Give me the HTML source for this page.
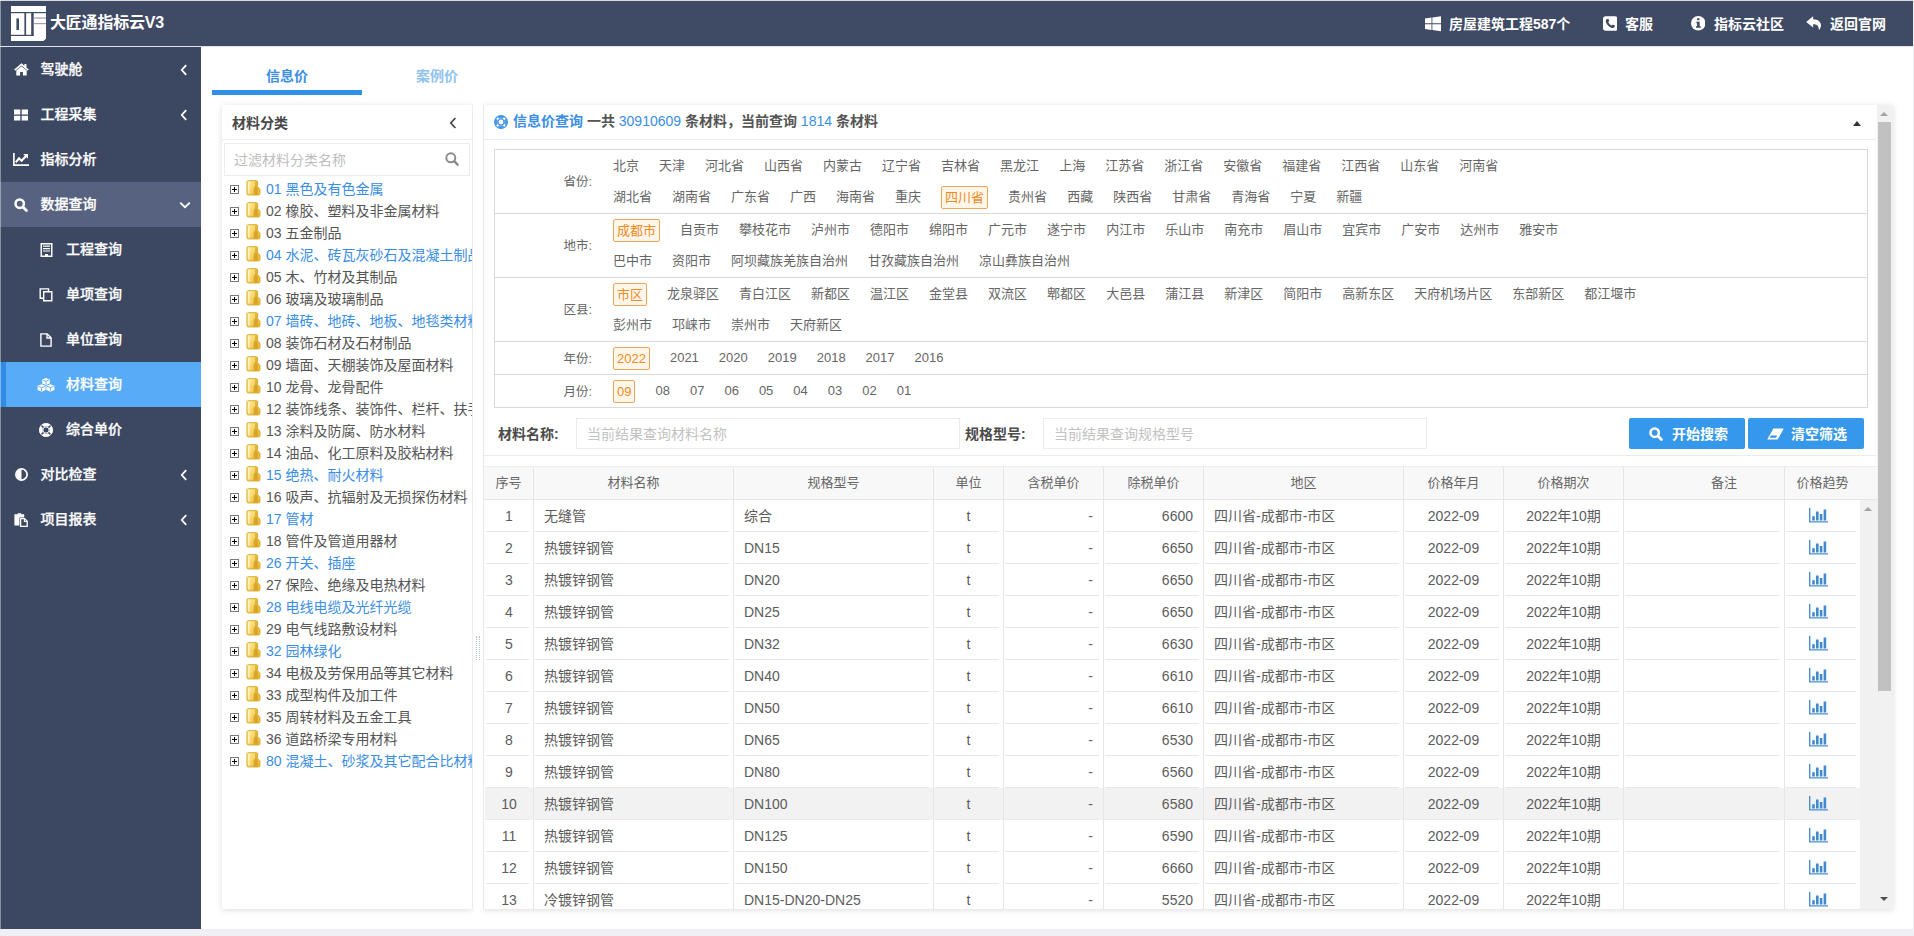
<!DOCTYPE html><html lang="zh-CN"><head><meta charset="utf-8"><title>大匠通指标云V3</title><style>
*{box-sizing:border-box;margin:0;padding:0}
html,body{width:1914px;height:936px;overflow:hidden;background:#f0f0f4}
body{position:relative;font-family:"Liberation Sans","Noto Sans CJK SC",sans-serif;font-size:14px;color:#555;-webkit-font-smoothing:antialiased}
.abs{position:absolute}
#hdr{left:0;top:0;width:1913px;height:47px;background:#3f4a64;border-bottom:1px solid #dfe2ea;color:#fff}
#hdr .t{position:absolute;top:2px;height:45px;line-height:45px;font-weight:700;white-space:nowrap}
#side{left:0;top:47px;width:201px;height:882px;background:#3c4862}
.mi{position:absolute;left:0;width:201px;height:45px;line-height:45px;color:#fff;font-weight:500;-webkit-text-stroke:0.25px #fff;font-size:14px;white-space:nowrap}
.mi .ic{position:absolute;top:0;height:45px;display:flex;align-items:center;justify-content:center}
.mi .tx{position:absolute;top:0}
#main{left:201px;top:47px;width:1712px;height:882px;background:#fff}
.tab{position:absolute;top:57px;height:38px;width:150px;text-align:center;line-height:38px;font-weight:700;font-size:14px}
.card{position:absolute;background:#fff;box-shadow:0 1px 6px rgba(0,0,0,.14)}
.tr{position:absolute;left:0;height:22px;line-height:22px;white-space:nowrap;font-size:14px;color:#555}
.tr.b{color:#3a8ee6}
.tr svg{position:absolute}
.fl{position:absolute;left:0;width:97px;text-align:right;font-size:12.5px;color:#666}
.frow{position:absolute;left:0;right:0;border-top:1px solid #d9d9d9}
.fi{position:absolute;left:118px;white-space:nowrap;font-size:13px;color:#666;height:31px;line-height:31px}
.fi span{display:inline-block;margin-right:20px;height:23px;line-height:21px;vertical-align:middle}
.fi span.s{padding:0 3px;line-height:21px;border:1px solid #f0a655;border-radius:2px;color:#f08a24;background:#fff6ea}
.inp{position:absolute;height:31px;border:1px solid #ececec;background:#fff;font-size:14px;color:#c2c2c2;line-height:31px;padding-left:10px;white-space:nowrap}
.lab{position:absolute;font-size:14px;font-weight:700;color:#4a4a4a;line-height:33px;white-space:nowrap}
.btn{position:absolute;height:31px;line-height:33px;background:#3598ea;color:#fff;font-weight:700;font-size:14px;border-radius:2px;white-space:nowrap}
.th{position:absolute;top:0;height:33px;line-height:31px;text-align:center;font-size:13px;color:#666;border-right:1px solid #e6e6e6;white-space:nowrap}
.row{position:absolute;left:0;width:1376px;height:32px}
.row.h{background:#f2f2f2}
.c{position:absolute;top:0;height:32px;background:linear-gradient(#e8e8e8,#e8e8e8) no-repeat 1px 31px / calc(100% - 5px) 1px;line-height:33px;font-size:14px;color:#5c5c5c;border-right:1px solid #e6e6e6;white-space:nowrap;overflow:hidden}
</style></head><body>
<div id="hdr" class="abs">
<svg width="35" height="35" viewBox="0 0 35 35" style="position:absolute;left:11px;top:6px"><path fill="#fff" d="M0 0H35V32.6L32.6 35H0z"/><g fill="#3f4a64"><rect x="0" y="6" width="35" height="1.2"/><rect x="13.4" y="6" width="1.7" height="23.6"/><rect x="20.2" y="6" width="2.5" height="23.6"/><rect x="5.4" y="12.4" width="2.6" height="11.6"/><rect x="0" y="28.8" width="22.7" height="1.2"/></g><g fill="#9aa0ad"><rect x="22.7" y="11.4" width="12.3" height="1.2"/><rect x="22.7" y="17" width="12.3" height="1.2"/></g></svg>
<div class="t" style="left:50px;top:0;font-size:16px;letter-spacing:-0.2px">大匠通指标云V3</div>
<div class="abs" style="left:1425px;top:16px;line-height:0"><svg width="16" height="15.5" viewBox="0 0 15 14" ><path fill="#fff" d="M0 2 L6.1 1.15 V6.6 H0z M6.9 1.05 L15 0 V6.6 H6.9z M0 7.4 H6.1 V12.85 L0 12z M6.9 7.4 H15 V14 L6.9 12.95z"/></svg></div>
<div class="t" style="left:1449px;font-size:14px">房屋建筑工程587个</div>
<div class="abs" style="left:1602.5px;top:16px;line-height:0"><svg width="14.5" height="15" viewBox="0 0 13 13" ><rect width="13" height="13" rx="2.4" fill="#fff"/><path fill="#3f4a64" d="M3.2 2.6 L4.8 2.3 L5.6 4.3 L4.7 5.1 C5.3 6.5 6.4 7.6 7.8 8.3 L8.7 7.3 L10.7 8.2 L10.3 9.9 C9.6 10.6 8.5 10.7 7.3 10.2 C5.1 9.3 3.5 7.6 2.7 5.4 C2.3 4.2 2.5 3.2 3.2 2.6z"/></svg></div>
<div class="t" style="left:1625px;font-size:14px">客服</div>
<div class="abs" style="left:1690.5px;top:16px;line-height:0"><svg width="14.5" height="14.5" viewBox="0 0 14 14" ><circle cx="7" cy="7" r="7" fill="#fff"/><path fill="#3f4a64" d="M5.9 2.2h2.3v2H5.9zM5.2 5.6h3.2v4.3h1v1.5H4.9V9.9h1V7.1h-0.7z"/></svg></div>
<div class="t" style="left:1714px;font-size:14px">指标云社区</div>
<div class="abs" style="left:1806px;top:15.5px;line-height:0"><svg width="16.5" height="14.5" viewBox="0 0 16 14" ><path fill="#fff" d="M6.9 0.2 L0.2 5.7 L6.9 11.2 V8 C10.2 8 12.3 9 12.6 13.8 C16.6 9 14.2 3.2 6.9 3.1 Z"/></svg></div>
<div class="t" style="left:1830px;font-size:14px">返回官网</div>
</div>
<div id="side" class="abs">
<div class="mi" style="top:0px;"><span class="ic" style="left:12px;width:18px"><svg width="15" height="13" viewBox="0 0 15 13" ><path fill="#fff" d="M7.5 0.3 L0.2 6.5 L1.2 7.7 L7.5 2.4 L13.8 7.7 L14.8 6.5 L12.4 4.4 V1 H10.4 V2.7 Z"/><path fill="#fff" d="M7.5 3.2 L2.3 7.5 V12.6 H6.1 V9 H8.9 V12.6 H12.7 V7.5 Z"/></svg></span><span class="tx" style="left:40.5px">驾驶舱</span>
<span class="ic" style="left:179px;width:10px"><svg width="8" height="12" viewBox="0 0 8 12" ><path fill="none" stroke="#fff" stroke-width="1.8" d="M6.2 1.2 L1.8 6 L6.2 10.8"/></svg></span>
</div>
<div class="mi" style="top:45px;"><span class="ic" style="left:12px;width:18px"><svg width="14" height="12" viewBox="0 0 14 12" ><path fill="#fff" d="M0 0.6h6.3v4.8H0zM7.7 0.6H14v4.8H7.7zM0 6.8h6.3v4.8H0zM7.7 6.8H14v4.8H7.7z"/></svg></span><span class="tx" style="left:40.5px">工程采集</span>
<span class="ic" style="left:179px;width:10px"><svg width="8" height="12" viewBox="0 0 8 12" ><path fill="none" stroke="#fff" stroke-width="1.8" d="M6.2 1.2 L1.8 6 L6.2 10.8"/></svg></span>
</div>
<div class="mi" style="top:90px;"><span class="ic" style="left:12px;width:18px"><svg width="16" height="13" viewBox="0 0 16 13" ><path fill="#fff" d="M0 0h1.7v11.3H16V13H0z"/><path fill="none" stroke="#fff" stroke-width="2.1" stroke-linejoin="miter" d="M2.8 9.4 L6 5.4 L8.6 7.8 L13 3"/><path fill="#fff" d="M10.2 1h4.8v4.8z"/></svg></span><span class="tx" style="left:40.5px">指标分析</span>
</div>
<div class="mi" style="top:135px;background:#56627f;"><span class="ic" style="left:12px;width:18px"><svg width="14" height="14" viewBox="0 0 14 14" ><circle cx="5.7" cy="5.7" r="4.2" fill="none" stroke="#fff" stroke-width="2.5"/><path stroke="#fff" stroke-width="2.8" stroke-linecap="round" d="M9.4 9.4 L12.4 12.4"/></svg></span><span class="tx" style="left:40.5px">数据查询</span>
<span class="ic" style="left:179px;width:12px"><svg width="12" height="8" viewBox="0 0 12 8" ><path fill="none" stroke="#fff" stroke-width="1.8" d="M1.2 1.6 L6 6.2 L10.8 1.6"/></svg></span>
</div>
<div class="mi" style="top:180px;"><span class="ic" style="left:37px;width:18px"><svg width="13" height="14" viewBox="0 0 13 14" ><path fill="#fff" fill-rule="evenodd" d="M0.5 0h12v14h-12zM2 1.5v11h3v-1.6h3v1.6h3v-11z"/><path fill="#fff" d="M3 2.6h7v1.2H3zM3 5h7v1.2H3zM3 7.4h7v1.2H3z"/></svg></span><span class="tx" style="left:66px">工程查询</span>
</div>
<div class="mi" style="top:225px;"><span class="ic" style="left:37px;width:18px"><svg width="14" height="14" viewBox="0 0 14 14" ><path fill="none" stroke="#fff" stroke-width="1.4" d="M4.7 3.7h8.1v9.1H4.7z"/><path fill="none" stroke="#fff" stroke-width="1.4" d="M9.5 3.4V0.9H1.2v9.4h3.2"/></svg></span><span class="tx" style="left:66px">单项查询</span>
</div>
<div class="mi" style="top:270px;"><span class="ic" style="left:37px;width:18px"><svg width="12" height="14" viewBox="0 0 12 14" ><path fill="none" stroke="#fff" stroke-width="1.4" d="M0.9 0.9h6.3l3.9 3.9v8.3H0.9z"/><path fill="none" stroke="#fff" stroke-width="1.3" d="M7 1v4h4"/></svg></span><span class="tx" style="left:66px">单位查询</span>
</div>
<div class="mi" style="top:315px;background:#58abf7;box-shadow:inset 6px 0 0 #2f8be3;"><span class="ic" style="left:37px;width:18px"><svg width="18" height="14" viewBox="0 0 18 14" ><g fill="#fff"><path d="M9 0 L12.8 1.5 V5.4 L9 7 L5.2 5.4 V1.5z"/><path d="M4.6 6.2 L8.6 7.8 V12 L4.6 13.8 L0.6 12 V7.8z"/><path d="M13.4 6.2 L17.4 7.8 V12 L13.4 13.8 L9.4 12 V7.8z"/></g><g fill="none" stroke="#58abf7" stroke-width="0.9"><path d="M5.9 2 L9 3.3 L12.1 2 M9 3.3 V6.4"/><path d="M1.3 8.3 L4.6 9.7 L7.9 8.3 M4.6 9.7 V13.2"/><path d="M10.1 8.3 L13.4 9.7 L16.7 8.3 M13.4 9.7 V13.2"/></g></svg></span><span class="tx" style="left:66px">材料查询</span>
</div>
<div class="mi" style="top:360px;"><span class="ic" style="left:37px;width:18px"><svg width="14" height="14" viewBox="0 0 14 14" ><circle cx="7" cy="7" r="5.1" fill="none" stroke="#fff" stroke-width="3.4"/><g stroke="#3c4862" stroke-width="1.5"><path d="M2.2 2.2 L4.6 4.6 M11.8 2.2 L9.4 4.6 M2.2 11.8 L4.6 9.4 M11.8 11.8 L9.4 9.4"/></g><circle cx="7" cy="7" r="6.6" fill="none" stroke="#fff" stroke-width="0.8"/><circle cx="7" cy="7" r="3" fill="none" stroke="#fff" stroke-width="0.8"/></svg></span><span class="tx" style="left:66px">综合单价</span>
</div>
<div class="mi" style="top:405px;"><span class="ic" style="left:12px;width:18px"><svg width="13" height="13" viewBox="0 0 13 13" ><circle cx="6.5" cy="6.5" r="5.6" fill="none" stroke="#fff" stroke-width="1.7"/><path fill="#fff" d="M6.5 1.6 A4.9 4.9 0 0 0 6.5 11.4z"/></svg></span><span class="tx" style="left:40.5px">对比检查</span>
<span class="ic" style="left:179px;width:10px"><svg width="8" height="12" viewBox="0 0 8 12" ><path fill="none" stroke="#fff" stroke-width="1.8" d="M6.2 1.2 L1.8 6 L6.2 10.8"/></svg></span>
</div>
<div class="mi" style="top:450px;"><span class="ic" style="left:12px;width:18px"><svg width="14" height="14" viewBox="0 0 14 14" ><path fill="#fff" d="M0.4 1.2h3.2V0.2h3.6v1h3v3.2H5.4v8H0.4z"/><path fill="none" stroke="#fff" stroke-width="1.3" d="M6.6 5.6h4l2.6 2.6v5.1H6.6z"/><path fill="none" stroke="#fff" stroke-width="1.1" d="M10.4 5.8v2.7h2.7"/></svg></span><span class="tx" style="left:40.5px">项目报表</span>
<span class="ic" style="left:179px;width:10px"><svg width="8" height="12" viewBox="0 0 8 12" ><path fill="none" stroke="#fff" stroke-width="1.8" d="M6.2 1.2 L1.8 6 L6.2 10.8"/></svg></span>
</div>
</div>
<div id="main" class="abs"></div>
<div class="tab" style="left:212px;color:#3a8ee6">信息价</div>
<div class="abs" style="left:212px;top:90px;width:150px;height:5px;background:#2f8fe9"></div>
<div class="tab" style="left:362px;color:#8fc3f0">案例价</div>
<div class="card" style="left:222px;top:105px;width:250px;height:804px;overflow:hidden">
<div class="abs" style="left:0;top:0;width:250px;height:35px;border-bottom:1px solid #eee"></div>
<div class="abs" style="left:10px;top:1px;line-height:35px;font-weight:700;color:#484848;font-size:14px">材料分类</div>
<div class="abs" style="left:227px;top:11px"><svg width="8" height="12" viewBox="0 0 8 12" ><path fill="none" stroke="#444" stroke-width="1.7" d="M6.4 1 L1.8 6 L6.4 11"/></svg></div>
<div class="abs" style="left:2px;top:38px;width:246px;height:33px;border:1px solid #ececec"></div>
<div class="abs" style="left:12px;top:39px;line-height:33px;color:#bdbdbd;font-size:14px">过滤材料分类名称</div>
<div class="abs" style="left:223px;top:47px"><svg width="14" height="14" viewBox="0 0 14 14" ><circle cx="5.8" cy="5.8" r="4.5" fill="none" stroke="#8a8a8a" stroke-width="1.9"/><path stroke="#8a8a8a" stroke-width="2.4" stroke-linecap="round" d="M9.4 9.4 L12.6 12.6"/></svg></div>
<div class="abs" style="left:0;top:73px;width:250px;height:700px;overflow:hidden">
<div class="tr b" style="top:0px"><svg style="left:8px;top:7px" width="9" height="9" viewBox="0 0 9 9" ><rect x="0.5" y="0.5" width="8" height="8" fill="#fff" stroke="#7a7a7a"/><path stroke="#000" stroke-width="1" d="M2 4.5h5M4.5 2v5"/></svg><svg style="left:24px;top:2px" width="15" height="16" viewBox="0 0 16 17" ><defs><linearGradient id="fg0" x1="0" y1="0" x2="1" y2="0.7"><stop offset="0" stop-color="#fff3ae"/><stop offset="0.5" stop-color="#f7d568"/><stop offset="1" stop-color="#ecba3a"/></linearGradient></defs><path d="M1 2.2 Q1 0.7 2.5 0.7 H11 Q12.4 0.7 12.4 2.2 V7.2 L14.9 9.8 V14.4 Q14.9 15.9 13.4 15.9 H2.5 Q1 15.9 1 14.4 Z" fill="url(#fg0)" stroke="#d6a722" stroke-width="1"/><path d="M9.9 1.4 h1.5 v5.4 l1.1 1.8 v6.8 h-4.3 v-6.8 l1.7 -1.9z" fill="#cf961a" opacity=".7"/><path d="M3.1 2.4 V14.4" stroke="#fffbe0" stroke-width="1.6" opacity=".75"/></svg><span style="position:absolute;left:44px">01 黑色及有色金属</span></div>
<div class="tr" style="top:22px"><svg style="left:8px;top:7px" width="9" height="9" viewBox="0 0 9 9" ><rect x="0.5" y="0.5" width="8" height="8" fill="#fff" stroke="#7a7a7a"/><path stroke="#000" stroke-width="1" d="M2 4.5h5M4.5 2v5"/></svg><svg style="left:24px;top:2px" width="15" height="16" viewBox="0 0 16 17" ><defs><linearGradient id="fg1" x1="0" y1="0" x2="1" y2="0.7"><stop offset="0" stop-color="#fff3ae"/><stop offset="0.5" stop-color="#f7d568"/><stop offset="1" stop-color="#ecba3a"/></linearGradient></defs><path d="M1 2.2 Q1 0.7 2.5 0.7 H11 Q12.4 0.7 12.4 2.2 V7.2 L14.9 9.8 V14.4 Q14.9 15.9 13.4 15.9 H2.5 Q1 15.9 1 14.4 Z" fill="url(#fg1)" stroke="#d6a722" stroke-width="1"/><path d="M9.9 1.4 h1.5 v5.4 l1.1 1.8 v6.8 h-4.3 v-6.8 l1.7 -1.9z" fill="#cf961a" opacity=".7"/><path d="M3.1 2.4 V14.4" stroke="#fffbe0" stroke-width="1.6" opacity=".75"/></svg><span style="position:absolute;left:44px">02 橡胶、塑料及非金属材料</span></div>
<div class="tr" style="top:44px"><svg style="left:8px;top:7px" width="9" height="9" viewBox="0 0 9 9" ><rect x="0.5" y="0.5" width="8" height="8" fill="#fff" stroke="#7a7a7a"/><path stroke="#000" stroke-width="1" d="M2 4.5h5M4.5 2v5"/></svg><svg style="left:24px;top:2px" width="15" height="16" viewBox="0 0 16 17" ><defs><linearGradient id="fg2" x1="0" y1="0" x2="1" y2="0.7"><stop offset="0" stop-color="#fff3ae"/><stop offset="0.5" stop-color="#f7d568"/><stop offset="1" stop-color="#ecba3a"/></linearGradient></defs><path d="M1 2.2 Q1 0.7 2.5 0.7 H11 Q12.4 0.7 12.4 2.2 V7.2 L14.9 9.8 V14.4 Q14.9 15.9 13.4 15.9 H2.5 Q1 15.9 1 14.4 Z" fill="url(#fg2)" stroke="#d6a722" stroke-width="1"/><path d="M9.9 1.4 h1.5 v5.4 l1.1 1.8 v6.8 h-4.3 v-6.8 l1.7 -1.9z" fill="#cf961a" opacity=".7"/><path d="M3.1 2.4 V14.4" stroke="#fffbe0" stroke-width="1.6" opacity=".75"/></svg><span style="position:absolute;left:44px">03 五金制品</span></div>
<div class="tr b" style="top:66px"><svg style="left:8px;top:7px" width="9" height="9" viewBox="0 0 9 9" ><rect x="0.5" y="0.5" width="8" height="8" fill="#fff" stroke="#7a7a7a"/><path stroke="#000" stroke-width="1" d="M2 4.5h5M4.5 2v5"/></svg><svg style="left:24px;top:2px" width="15" height="16" viewBox="0 0 16 17" ><defs><linearGradient id="fg3" x1="0" y1="0" x2="1" y2="0.7"><stop offset="0" stop-color="#fff3ae"/><stop offset="0.5" stop-color="#f7d568"/><stop offset="1" stop-color="#ecba3a"/></linearGradient></defs><path d="M1 2.2 Q1 0.7 2.5 0.7 H11 Q12.4 0.7 12.4 2.2 V7.2 L14.9 9.8 V14.4 Q14.9 15.9 13.4 15.9 H2.5 Q1 15.9 1 14.4 Z" fill="url(#fg3)" stroke="#d6a722" stroke-width="1"/><path d="M9.9 1.4 h1.5 v5.4 l1.1 1.8 v6.8 h-4.3 v-6.8 l1.7 -1.9z" fill="#cf961a" opacity=".7"/><path d="M3.1 2.4 V14.4" stroke="#fffbe0" stroke-width="1.6" opacity=".75"/></svg><span style="position:absolute;left:44px">04 水泥、砖瓦灰砂石及混凝土制品</span></div>
<div class="tr" style="top:88px"><svg style="left:8px;top:7px" width="9" height="9" viewBox="0 0 9 9" ><rect x="0.5" y="0.5" width="8" height="8" fill="#fff" stroke="#7a7a7a"/><path stroke="#000" stroke-width="1" d="M2 4.5h5M4.5 2v5"/></svg><svg style="left:24px;top:2px" width="15" height="16" viewBox="0 0 16 17" ><defs><linearGradient id="fg4" x1="0" y1="0" x2="1" y2="0.7"><stop offset="0" stop-color="#fff3ae"/><stop offset="0.5" stop-color="#f7d568"/><stop offset="1" stop-color="#ecba3a"/></linearGradient></defs><path d="M1 2.2 Q1 0.7 2.5 0.7 H11 Q12.4 0.7 12.4 2.2 V7.2 L14.9 9.8 V14.4 Q14.9 15.9 13.4 15.9 H2.5 Q1 15.9 1 14.4 Z" fill="url(#fg4)" stroke="#d6a722" stroke-width="1"/><path d="M9.9 1.4 h1.5 v5.4 l1.1 1.8 v6.8 h-4.3 v-6.8 l1.7 -1.9z" fill="#cf961a" opacity=".7"/><path d="M3.1 2.4 V14.4" stroke="#fffbe0" stroke-width="1.6" opacity=".75"/></svg><span style="position:absolute;left:44px">05 木、竹材及其制品</span></div>
<div class="tr" style="top:110px"><svg style="left:8px;top:7px" width="9" height="9" viewBox="0 0 9 9" ><rect x="0.5" y="0.5" width="8" height="8" fill="#fff" stroke="#7a7a7a"/><path stroke="#000" stroke-width="1" d="M2 4.5h5M4.5 2v5"/></svg><svg style="left:24px;top:2px" width="15" height="16" viewBox="0 0 16 17" ><defs><linearGradient id="fg5" x1="0" y1="0" x2="1" y2="0.7"><stop offset="0" stop-color="#fff3ae"/><stop offset="0.5" stop-color="#f7d568"/><stop offset="1" stop-color="#ecba3a"/></linearGradient></defs><path d="M1 2.2 Q1 0.7 2.5 0.7 H11 Q12.4 0.7 12.4 2.2 V7.2 L14.9 9.8 V14.4 Q14.9 15.9 13.4 15.9 H2.5 Q1 15.9 1 14.4 Z" fill="url(#fg5)" stroke="#d6a722" stroke-width="1"/><path d="M9.9 1.4 h1.5 v5.4 l1.1 1.8 v6.8 h-4.3 v-6.8 l1.7 -1.9z" fill="#cf961a" opacity=".7"/><path d="M3.1 2.4 V14.4" stroke="#fffbe0" stroke-width="1.6" opacity=".75"/></svg><span style="position:absolute;left:44px">06 玻璃及玻璃制品</span></div>
<div class="tr b" style="top:132px"><svg style="left:8px;top:7px" width="9" height="9" viewBox="0 0 9 9" ><rect x="0.5" y="0.5" width="8" height="8" fill="#fff" stroke="#7a7a7a"/><path stroke="#000" stroke-width="1" d="M2 4.5h5M4.5 2v5"/></svg><svg style="left:24px;top:2px" width="15" height="16" viewBox="0 0 16 17" ><defs><linearGradient id="fg6" x1="0" y1="0" x2="1" y2="0.7"><stop offset="0" stop-color="#fff3ae"/><stop offset="0.5" stop-color="#f7d568"/><stop offset="1" stop-color="#ecba3a"/></linearGradient></defs><path d="M1 2.2 Q1 0.7 2.5 0.7 H11 Q12.4 0.7 12.4 2.2 V7.2 L14.9 9.8 V14.4 Q14.9 15.9 13.4 15.9 H2.5 Q1 15.9 1 14.4 Z" fill="url(#fg6)" stroke="#d6a722" stroke-width="1"/><path d="M9.9 1.4 h1.5 v5.4 l1.1 1.8 v6.8 h-4.3 v-6.8 l1.7 -1.9z" fill="#cf961a" opacity=".7"/><path d="M3.1 2.4 V14.4" stroke="#fffbe0" stroke-width="1.6" opacity=".75"/></svg><span style="position:absolute;left:44px">07 墙砖、地砖、地板、地毯类材料</span></div>
<div class="tr" style="top:154px"><svg style="left:8px;top:7px" width="9" height="9" viewBox="0 0 9 9" ><rect x="0.5" y="0.5" width="8" height="8" fill="#fff" stroke="#7a7a7a"/><path stroke="#000" stroke-width="1" d="M2 4.5h5M4.5 2v5"/></svg><svg style="left:24px;top:2px" width="15" height="16" viewBox="0 0 16 17" ><defs><linearGradient id="fg7" x1="0" y1="0" x2="1" y2="0.7"><stop offset="0" stop-color="#fff3ae"/><stop offset="0.5" stop-color="#f7d568"/><stop offset="1" stop-color="#ecba3a"/></linearGradient></defs><path d="M1 2.2 Q1 0.7 2.5 0.7 H11 Q12.4 0.7 12.4 2.2 V7.2 L14.9 9.8 V14.4 Q14.9 15.9 13.4 15.9 H2.5 Q1 15.9 1 14.4 Z" fill="url(#fg7)" stroke="#d6a722" stroke-width="1"/><path d="M9.9 1.4 h1.5 v5.4 l1.1 1.8 v6.8 h-4.3 v-6.8 l1.7 -1.9z" fill="#cf961a" opacity=".7"/><path d="M3.1 2.4 V14.4" stroke="#fffbe0" stroke-width="1.6" opacity=".75"/></svg><span style="position:absolute;left:44px">08 装饰石材及石材制品</span></div>
<div class="tr" style="top:176px"><svg style="left:8px;top:7px" width="9" height="9" viewBox="0 0 9 9" ><rect x="0.5" y="0.5" width="8" height="8" fill="#fff" stroke="#7a7a7a"/><path stroke="#000" stroke-width="1" d="M2 4.5h5M4.5 2v5"/></svg><svg style="left:24px;top:2px" width="15" height="16" viewBox="0 0 16 17" ><defs><linearGradient id="fg8" x1="0" y1="0" x2="1" y2="0.7"><stop offset="0" stop-color="#fff3ae"/><stop offset="0.5" stop-color="#f7d568"/><stop offset="1" stop-color="#ecba3a"/></linearGradient></defs><path d="M1 2.2 Q1 0.7 2.5 0.7 H11 Q12.4 0.7 12.4 2.2 V7.2 L14.9 9.8 V14.4 Q14.9 15.9 13.4 15.9 H2.5 Q1 15.9 1 14.4 Z" fill="url(#fg8)" stroke="#d6a722" stroke-width="1"/><path d="M9.9 1.4 h1.5 v5.4 l1.1 1.8 v6.8 h-4.3 v-6.8 l1.7 -1.9z" fill="#cf961a" opacity=".7"/><path d="M3.1 2.4 V14.4" stroke="#fffbe0" stroke-width="1.6" opacity=".75"/></svg><span style="position:absolute;left:44px">09 墙面、天棚装饰及屋面材料</span></div>
<div class="tr" style="top:198px"><svg style="left:8px;top:7px" width="9" height="9" viewBox="0 0 9 9" ><rect x="0.5" y="0.5" width="8" height="8" fill="#fff" stroke="#7a7a7a"/><path stroke="#000" stroke-width="1" d="M2 4.5h5M4.5 2v5"/></svg><svg style="left:24px;top:2px" width="15" height="16" viewBox="0 0 16 17" ><defs><linearGradient id="fg9" x1="0" y1="0" x2="1" y2="0.7"><stop offset="0" stop-color="#fff3ae"/><stop offset="0.5" stop-color="#f7d568"/><stop offset="1" stop-color="#ecba3a"/></linearGradient></defs><path d="M1 2.2 Q1 0.7 2.5 0.7 H11 Q12.4 0.7 12.4 2.2 V7.2 L14.9 9.8 V14.4 Q14.9 15.9 13.4 15.9 H2.5 Q1 15.9 1 14.4 Z" fill="url(#fg9)" stroke="#d6a722" stroke-width="1"/><path d="M9.9 1.4 h1.5 v5.4 l1.1 1.8 v6.8 h-4.3 v-6.8 l1.7 -1.9z" fill="#cf961a" opacity=".7"/><path d="M3.1 2.4 V14.4" stroke="#fffbe0" stroke-width="1.6" opacity=".75"/></svg><span style="position:absolute;left:44px">10 龙骨、龙骨配件</span></div>
<div class="tr" style="top:220px"><svg style="left:8px;top:7px" width="9" height="9" viewBox="0 0 9 9" ><rect x="0.5" y="0.5" width="8" height="8" fill="#fff" stroke="#7a7a7a"/><path stroke="#000" stroke-width="1" d="M2 4.5h5M4.5 2v5"/></svg><svg style="left:24px;top:2px" width="15" height="16" viewBox="0 0 16 17" ><defs><linearGradient id="fg10" x1="0" y1="0" x2="1" y2="0.7"><stop offset="0" stop-color="#fff3ae"/><stop offset="0.5" stop-color="#f7d568"/><stop offset="1" stop-color="#ecba3a"/></linearGradient></defs><path d="M1 2.2 Q1 0.7 2.5 0.7 H11 Q12.4 0.7 12.4 2.2 V7.2 L14.9 9.8 V14.4 Q14.9 15.9 13.4 15.9 H2.5 Q1 15.9 1 14.4 Z" fill="url(#fg10)" stroke="#d6a722" stroke-width="1"/><path d="M9.9 1.4 h1.5 v5.4 l1.1 1.8 v6.8 h-4.3 v-6.8 l1.7 -1.9z" fill="#cf961a" opacity=".7"/><path d="M3.1 2.4 V14.4" stroke="#fffbe0" stroke-width="1.6" opacity=".75"/></svg><span style="position:absolute;left:44px">12 装饰线条、装饰件、栏杆、扶手及其他</span></div>
<div class="tr" style="top:242px"><svg style="left:8px;top:7px" width="9" height="9" viewBox="0 0 9 9" ><rect x="0.5" y="0.5" width="8" height="8" fill="#fff" stroke="#7a7a7a"/><path stroke="#000" stroke-width="1" d="M2 4.5h5M4.5 2v5"/></svg><svg style="left:24px;top:2px" width="15" height="16" viewBox="0 0 16 17" ><defs><linearGradient id="fg11" x1="0" y1="0" x2="1" y2="0.7"><stop offset="0" stop-color="#fff3ae"/><stop offset="0.5" stop-color="#f7d568"/><stop offset="1" stop-color="#ecba3a"/></linearGradient></defs><path d="M1 2.2 Q1 0.7 2.5 0.7 H11 Q12.4 0.7 12.4 2.2 V7.2 L14.9 9.8 V14.4 Q14.9 15.9 13.4 15.9 H2.5 Q1 15.9 1 14.4 Z" fill="url(#fg11)" stroke="#d6a722" stroke-width="1"/><path d="M9.9 1.4 h1.5 v5.4 l1.1 1.8 v6.8 h-4.3 v-6.8 l1.7 -1.9z" fill="#cf961a" opacity=".7"/><path d="M3.1 2.4 V14.4" stroke="#fffbe0" stroke-width="1.6" opacity=".75"/></svg><span style="position:absolute;left:44px">13 涂料及防腐、防水材料</span></div>
<div class="tr" style="top:264px"><svg style="left:8px;top:7px" width="9" height="9" viewBox="0 0 9 9" ><rect x="0.5" y="0.5" width="8" height="8" fill="#fff" stroke="#7a7a7a"/><path stroke="#000" stroke-width="1" d="M2 4.5h5M4.5 2v5"/></svg><svg style="left:24px;top:2px" width="15" height="16" viewBox="0 0 16 17" ><defs><linearGradient id="fg12" x1="0" y1="0" x2="1" y2="0.7"><stop offset="0" stop-color="#fff3ae"/><stop offset="0.5" stop-color="#f7d568"/><stop offset="1" stop-color="#ecba3a"/></linearGradient></defs><path d="M1 2.2 Q1 0.7 2.5 0.7 H11 Q12.4 0.7 12.4 2.2 V7.2 L14.9 9.8 V14.4 Q14.9 15.9 13.4 15.9 H2.5 Q1 15.9 1 14.4 Z" fill="url(#fg12)" stroke="#d6a722" stroke-width="1"/><path d="M9.9 1.4 h1.5 v5.4 l1.1 1.8 v6.8 h-4.3 v-6.8 l1.7 -1.9z" fill="#cf961a" opacity=".7"/><path d="M3.1 2.4 V14.4" stroke="#fffbe0" stroke-width="1.6" opacity=".75"/></svg><span style="position:absolute;left:44px">14 油品、化工原料及胶粘材料</span></div>
<div class="tr b" style="top:286px"><svg style="left:8px;top:7px" width="9" height="9" viewBox="0 0 9 9" ><rect x="0.5" y="0.5" width="8" height="8" fill="#fff" stroke="#7a7a7a"/><path stroke="#000" stroke-width="1" d="M2 4.5h5M4.5 2v5"/></svg><svg style="left:24px;top:2px" width="15" height="16" viewBox="0 0 16 17" ><defs><linearGradient id="fg13" x1="0" y1="0" x2="1" y2="0.7"><stop offset="0" stop-color="#fff3ae"/><stop offset="0.5" stop-color="#f7d568"/><stop offset="1" stop-color="#ecba3a"/></linearGradient></defs><path d="M1 2.2 Q1 0.7 2.5 0.7 H11 Q12.4 0.7 12.4 2.2 V7.2 L14.9 9.8 V14.4 Q14.9 15.9 13.4 15.9 H2.5 Q1 15.9 1 14.4 Z" fill="url(#fg13)" stroke="#d6a722" stroke-width="1"/><path d="M9.9 1.4 h1.5 v5.4 l1.1 1.8 v6.8 h-4.3 v-6.8 l1.7 -1.9z" fill="#cf961a" opacity=".7"/><path d="M3.1 2.4 V14.4" stroke="#fffbe0" stroke-width="1.6" opacity=".75"/></svg><span style="position:absolute;left:44px">15 绝热、耐火材料</span></div>
<div class="tr" style="top:308px"><svg style="left:8px;top:7px" width="9" height="9" viewBox="0 0 9 9" ><rect x="0.5" y="0.5" width="8" height="8" fill="#fff" stroke="#7a7a7a"/><path stroke="#000" stroke-width="1" d="M2 4.5h5M4.5 2v5"/></svg><svg style="left:24px;top:2px" width="15" height="16" viewBox="0 0 16 17" ><defs><linearGradient id="fg14" x1="0" y1="0" x2="1" y2="0.7"><stop offset="0" stop-color="#fff3ae"/><stop offset="0.5" stop-color="#f7d568"/><stop offset="1" stop-color="#ecba3a"/></linearGradient></defs><path d="M1 2.2 Q1 0.7 2.5 0.7 H11 Q12.4 0.7 12.4 2.2 V7.2 L14.9 9.8 V14.4 Q14.9 15.9 13.4 15.9 H2.5 Q1 15.9 1 14.4 Z" fill="url(#fg14)" stroke="#d6a722" stroke-width="1"/><path d="M9.9 1.4 h1.5 v5.4 l1.1 1.8 v6.8 h-4.3 v-6.8 l1.7 -1.9z" fill="#cf961a" opacity=".7"/><path d="M3.1 2.4 V14.4" stroke="#fffbe0" stroke-width="1.6" opacity=".75"/></svg><span style="position:absolute;left:44px">16 吸声、抗辐射及无损探伤材料</span></div>
<div class="tr b" style="top:330px"><svg style="left:8px;top:7px" width="9" height="9" viewBox="0 0 9 9" ><rect x="0.5" y="0.5" width="8" height="8" fill="#fff" stroke="#7a7a7a"/><path stroke="#000" stroke-width="1" d="M2 4.5h5M4.5 2v5"/></svg><svg style="left:24px;top:2px" width="15" height="16" viewBox="0 0 16 17" ><defs><linearGradient id="fg15" x1="0" y1="0" x2="1" y2="0.7"><stop offset="0" stop-color="#fff3ae"/><stop offset="0.5" stop-color="#f7d568"/><stop offset="1" stop-color="#ecba3a"/></linearGradient></defs><path d="M1 2.2 Q1 0.7 2.5 0.7 H11 Q12.4 0.7 12.4 2.2 V7.2 L14.9 9.8 V14.4 Q14.9 15.9 13.4 15.9 H2.5 Q1 15.9 1 14.4 Z" fill="url(#fg15)" stroke="#d6a722" stroke-width="1"/><path d="M9.9 1.4 h1.5 v5.4 l1.1 1.8 v6.8 h-4.3 v-6.8 l1.7 -1.9z" fill="#cf961a" opacity=".7"/><path d="M3.1 2.4 V14.4" stroke="#fffbe0" stroke-width="1.6" opacity=".75"/></svg><span style="position:absolute;left:44px">17 管材</span></div>
<div class="tr" style="top:352px"><svg style="left:8px;top:7px" width="9" height="9" viewBox="0 0 9 9" ><rect x="0.5" y="0.5" width="8" height="8" fill="#fff" stroke="#7a7a7a"/><path stroke="#000" stroke-width="1" d="M2 4.5h5M4.5 2v5"/></svg><svg style="left:24px;top:2px" width="15" height="16" viewBox="0 0 16 17" ><defs><linearGradient id="fg16" x1="0" y1="0" x2="1" y2="0.7"><stop offset="0" stop-color="#fff3ae"/><stop offset="0.5" stop-color="#f7d568"/><stop offset="1" stop-color="#ecba3a"/></linearGradient></defs><path d="M1 2.2 Q1 0.7 2.5 0.7 H11 Q12.4 0.7 12.4 2.2 V7.2 L14.9 9.8 V14.4 Q14.9 15.9 13.4 15.9 H2.5 Q1 15.9 1 14.4 Z" fill="url(#fg16)" stroke="#d6a722" stroke-width="1"/><path d="M9.9 1.4 h1.5 v5.4 l1.1 1.8 v6.8 h-4.3 v-6.8 l1.7 -1.9z" fill="#cf961a" opacity=".7"/><path d="M3.1 2.4 V14.4" stroke="#fffbe0" stroke-width="1.6" opacity=".75"/></svg><span style="position:absolute;left:44px">18 管件及管道用器材</span></div>
<div class="tr b" style="top:374px"><svg style="left:8px;top:7px" width="9" height="9" viewBox="0 0 9 9" ><rect x="0.5" y="0.5" width="8" height="8" fill="#fff" stroke="#7a7a7a"/><path stroke="#000" stroke-width="1" d="M2 4.5h5M4.5 2v5"/></svg><svg style="left:24px;top:2px" width="15" height="16" viewBox="0 0 16 17" ><defs><linearGradient id="fg17" x1="0" y1="0" x2="1" y2="0.7"><stop offset="0" stop-color="#fff3ae"/><stop offset="0.5" stop-color="#f7d568"/><stop offset="1" stop-color="#ecba3a"/></linearGradient></defs><path d="M1 2.2 Q1 0.7 2.5 0.7 H11 Q12.4 0.7 12.4 2.2 V7.2 L14.9 9.8 V14.4 Q14.9 15.9 13.4 15.9 H2.5 Q1 15.9 1 14.4 Z" fill="url(#fg17)" stroke="#d6a722" stroke-width="1"/><path d="M9.9 1.4 h1.5 v5.4 l1.1 1.8 v6.8 h-4.3 v-6.8 l1.7 -1.9z" fill="#cf961a" opacity=".7"/><path d="M3.1 2.4 V14.4" stroke="#fffbe0" stroke-width="1.6" opacity=".75"/></svg><span style="position:absolute;left:44px">26 开关、插座</span></div>
<div class="tr" style="top:396px"><svg style="left:8px;top:7px" width="9" height="9" viewBox="0 0 9 9" ><rect x="0.5" y="0.5" width="8" height="8" fill="#fff" stroke="#7a7a7a"/><path stroke="#000" stroke-width="1" d="M2 4.5h5M4.5 2v5"/></svg><svg style="left:24px;top:2px" width="15" height="16" viewBox="0 0 16 17" ><defs><linearGradient id="fg18" x1="0" y1="0" x2="1" y2="0.7"><stop offset="0" stop-color="#fff3ae"/><stop offset="0.5" stop-color="#f7d568"/><stop offset="1" stop-color="#ecba3a"/></linearGradient></defs><path d="M1 2.2 Q1 0.7 2.5 0.7 H11 Q12.4 0.7 12.4 2.2 V7.2 L14.9 9.8 V14.4 Q14.9 15.9 13.4 15.9 H2.5 Q1 15.9 1 14.4 Z" fill="url(#fg18)" stroke="#d6a722" stroke-width="1"/><path d="M9.9 1.4 h1.5 v5.4 l1.1 1.8 v6.8 h-4.3 v-6.8 l1.7 -1.9z" fill="#cf961a" opacity=".7"/><path d="M3.1 2.4 V14.4" stroke="#fffbe0" stroke-width="1.6" opacity=".75"/></svg><span style="position:absolute;left:44px">27 保险、绝缘及电热材料</span></div>
<div class="tr b" style="top:418px"><svg style="left:8px;top:7px" width="9" height="9" viewBox="0 0 9 9" ><rect x="0.5" y="0.5" width="8" height="8" fill="#fff" stroke="#7a7a7a"/><path stroke="#000" stroke-width="1" d="M2 4.5h5M4.5 2v5"/></svg><svg style="left:24px;top:2px" width="15" height="16" viewBox="0 0 16 17" ><defs><linearGradient id="fg19" x1="0" y1="0" x2="1" y2="0.7"><stop offset="0" stop-color="#fff3ae"/><stop offset="0.5" stop-color="#f7d568"/><stop offset="1" stop-color="#ecba3a"/></linearGradient></defs><path d="M1 2.2 Q1 0.7 2.5 0.7 H11 Q12.4 0.7 12.4 2.2 V7.2 L14.9 9.8 V14.4 Q14.9 15.9 13.4 15.9 H2.5 Q1 15.9 1 14.4 Z" fill="url(#fg19)" stroke="#d6a722" stroke-width="1"/><path d="M9.9 1.4 h1.5 v5.4 l1.1 1.8 v6.8 h-4.3 v-6.8 l1.7 -1.9z" fill="#cf961a" opacity=".7"/><path d="M3.1 2.4 V14.4" stroke="#fffbe0" stroke-width="1.6" opacity=".75"/></svg><span style="position:absolute;left:44px">28 电线电缆及光纤光缆</span></div>
<div class="tr" style="top:440px"><svg style="left:8px;top:7px" width="9" height="9" viewBox="0 0 9 9" ><rect x="0.5" y="0.5" width="8" height="8" fill="#fff" stroke="#7a7a7a"/><path stroke="#000" stroke-width="1" d="M2 4.5h5M4.5 2v5"/></svg><svg style="left:24px;top:2px" width="15" height="16" viewBox="0 0 16 17" ><defs><linearGradient id="fg20" x1="0" y1="0" x2="1" y2="0.7"><stop offset="0" stop-color="#fff3ae"/><stop offset="0.5" stop-color="#f7d568"/><stop offset="1" stop-color="#ecba3a"/></linearGradient></defs><path d="M1 2.2 Q1 0.7 2.5 0.7 H11 Q12.4 0.7 12.4 2.2 V7.2 L14.9 9.8 V14.4 Q14.9 15.9 13.4 15.9 H2.5 Q1 15.9 1 14.4 Z" fill="url(#fg20)" stroke="#d6a722" stroke-width="1"/><path d="M9.9 1.4 h1.5 v5.4 l1.1 1.8 v6.8 h-4.3 v-6.8 l1.7 -1.9z" fill="#cf961a" opacity=".7"/><path d="M3.1 2.4 V14.4" stroke="#fffbe0" stroke-width="1.6" opacity=".75"/></svg><span style="position:absolute;left:44px">29 电气线路敷设材料</span></div>
<div class="tr b" style="top:462px"><svg style="left:8px;top:7px" width="9" height="9" viewBox="0 0 9 9" ><rect x="0.5" y="0.5" width="8" height="8" fill="#fff" stroke="#7a7a7a"/><path stroke="#000" stroke-width="1" d="M2 4.5h5M4.5 2v5"/></svg><svg style="left:24px;top:2px" width="15" height="16" viewBox="0 0 16 17" ><defs><linearGradient id="fg21" x1="0" y1="0" x2="1" y2="0.7"><stop offset="0" stop-color="#fff3ae"/><stop offset="0.5" stop-color="#f7d568"/><stop offset="1" stop-color="#ecba3a"/></linearGradient></defs><path d="M1 2.2 Q1 0.7 2.5 0.7 H11 Q12.4 0.7 12.4 2.2 V7.2 L14.9 9.8 V14.4 Q14.9 15.9 13.4 15.9 H2.5 Q1 15.9 1 14.4 Z" fill="url(#fg21)" stroke="#d6a722" stroke-width="1"/><path d="M9.9 1.4 h1.5 v5.4 l1.1 1.8 v6.8 h-4.3 v-6.8 l1.7 -1.9z" fill="#cf961a" opacity=".7"/><path d="M3.1 2.4 V14.4" stroke="#fffbe0" stroke-width="1.6" opacity=".75"/></svg><span style="position:absolute;left:44px">32 园林绿化</span></div>
<div class="tr" style="top:484px"><svg style="left:8px;top:7px" width="9" height="9" viewBox="0 0 9 9" ><rect x="0.5" y="0.5" width="8" height="8" fill="#fff" stroke="#7a7a7a"/><path stroke="#000" stroke-width="1" d="M2 4.5h5M4.5 2v5"/></svg><svg style="left:24px;top:2px" width="15" height="16" viewBox="0 0 16 17" ><defs><linearGradient id="fg22" x1="0" y1="0" x2="1" y2="0.7"><stop offset="0" stop-color="#fff3ae"/><stop offset="0.5" stop-color="#f7d568"/><stop offset="1" stop-color="#ecba3a"/></linearGradient></defs><path d="M1 2.2 Q1 0.7 2.5 0.7 H11 Q12.4 0.7 12.4 2.2 V7.2 L14.9 9.8 V14.4 Q14.9 15.9 13.4 15.9 H2.5 Q1 15.9 1 14.4 Z" fill="url(#fg22)" stroke="#d6a722" stroke-width="1"/><path d="M9.9 1.4 h1.5 v5.4 l1.1 1.8 v6.8 h-4.3 v-6.8 l1.7 -1.9z" fill="#cf961a" opacity=".7"/><path d="M3.1 2.4 V14.4" stroke="#fffbe0" stroke-width="1.6" opacity=".75"/></svg><span style="position:absolute;left:44px">34 电极及劳保用品等其它材料</span></div>
<div class="tr" style="top:506px"><svg style="left:8px;top:7px" width="9" height="9" viewBox="0 0 9 9" ><rect x="0.5" y="0.5" width="8" height="8" fill="#fff" stroke="#7a7a7a"/><path stroke="#000" stroke-width="1" d="M2 4.5h5M4.5 2v5"/></svg><svg style="left:24px;top:2px" width="15" height="16" viewBox="0 0 16 17" ><defs><linearGradient id="fg23" x1="0" y1="0" x2="1" y2="0.7"><stop offset="0" stop-color="#fff3ae"/><stop offset="0.5" stop-color="#f7d568"/><stop offset="1" stop-color="#ecba3a"/></linearGradient></defs><path d="M1 2.2 Q1 0.7 2.5 0.7 H11 Q12.4 0.7 12.4 2.2 V7.2 L14.9 9.8 V14.4 Q14.9 15.9 13.4 15.9 H2.5 Q1 15.9 1 14.4 Z" fill="url(#fg23)" stroke="#d6a722" stroke-width="1"/><path d="M9.9 1.4 h1.5 v5.4 l1.1 1.8 v6.8 h-4.3 v-6.8 l1.7 -1.9z" fill="#cf961a" opacity=".7"/><path d="M3.1 2.4 V14.4" stroke="#fffbe0" stroke-width="1.6" opacity=".75"/></svg><span style="position:absolute;left:44px">33 成型构件及加工件</span></div>
<div class="tr" style="top:528px"><svg style="left:8px;top:7px" width="9" height="9" viewBox="0 0 9 9" ><rect x="0.5" y="0.5" width="8" height="8" fill="#fff" stroke="#7a7a7a"/><path stroke="#000" stroke-width="1" d="M2 4.5h5M4.5 2v5"/></svg><svg style="left:24px;top:2px" width="15" height="16" viewBox="0 0 16 17" ><defs><linearGradient id="fg24" x1="0" y1="0" x2="1" y2="0.7"><stop offset="0" stop-color="#fff3ae"/><stop offset="0.5" stop-color="#f7d568"/><stop offset="1" stop-color="#ecba3a"/></linearGradient></defs><path d="M1 2.2 Q1 0.7 2.5 0.7 H11 Q12.4 0.7 12.4 2.2 V7.2 L14.9 9.8 V14.4 Q14.9 15.9 13.4 15.9 H2.5 Q1 15.9 1 14.4 Z" fill="url(#fg24)" stroke="#d6a722" stroke-width="1"/><path d="M9.9 1.4 h1.5 v5.4 l1.1 1.8 v6.8 h-4.3 v-6.8 l1.7 -1.9z" fill="#cf961a" opacity=".7"/><path d="M3.1 2.4 V14.4" stroke="#fffbe0" stroke-width="1.6" opacity=".75"/></svg><span style="position:absolute;left:44px">35 周转材料及五金工具</span></div>
<div class="tr" style="top:550px"><svg style="left:8px;top:7px" width="9" height="9" viewBox="0 0 9 9" ><rect x="0.5" y="0.5" width="8" height="8" fill="#fff" stroke="#7a7a7a"/><path stroke="#000" stroke-width="1" d="M2 4.5h5M4.5 2v5"/></svg><svg style="left:24px;top:2px" width="15" height="16" viewBox="0 0 16 17" ><defs><linearGradient id="fg25" x1="0" y1="0" x2="1" y2="0.7"><stop offset="0" stop-color="#fff3ae"/><stop offset="0.5" stop-color="#f7d568"/><stop offset="1" stop-color="#ecba3a"/></linearGradient></defs><path d="M1 2.2 Q1 0.7 2.5 0.7 H11 Q12.4 0.7 12.4 2.2 V7.2 L14.9 9.8 V14.4 Q14.9 15.9 13.4 15.9 H2.5 Q1 15.9 1 14.4 Z" fill="url(#fg25)" stroke="#d6a722" stroke-width="1"/><path d="M9.9 1.4 h1.5 v5.4 l1.1 1.8 v6.8 h-4.3 v-6.8 l1.7 -1.9z" fill="#cf961a" opacity=".7"/><path d="M3.1 2.4 V14.4" stroke="#fffbe0" stroke-width="1.6" opacity=".75"/></svg><span style="position:absolute;left:44px">36 道路桥梁专用材料</span></div>
<div class="tr b" style="top:572px"><svg style="left:8px;top:7px" width="9" height="9" viewBox="0 0 9 9" ><rect x="0.5" y="0.5" width="8" height="8" fill="#fff" stroke="#7a7a7a"/><path stroke="#000" stroke-width="1" d="M2 4.5h5M4.5 2v5"/></svg><svg style="left:24px;top:2px" width="15" height="16" viewBox="0 0 16 17" ><defs><linearGradient id="fg26" x1="0" y1="0" x2="1" y2="0.7"><stop offset="0" stop-color="#fff3ae"/><stop offset="0.5" stop-color="#f7d568"/><stop offset="1" stop-color="#ecba3a"/></linearGradient></defs><path d="M1 2.2 Q1 0.7 2.5 0.7 H11 Q12.4 0.7 12.4 2.2 V7.2 L14.9 9.8 V14.4 Q14.9 15.9 13.4 15.9 H2.5 Q1 15.9 1 14.4 Z" fill="url(#fg26)" stroke="#d6a722" stroke-width="1"/><path d="M9.9 1.4 h1.5 v5.4 l1.1 1.8 v6.8 h-4.3 v-6.8 l1.7 -1.9z" fill="#cf961a" opacity=".7"/><path d="M3.1 2.4 V14.4" stroke="#fffbe0" stroke-width="1.6" opacity=".75"/></svg><span style="position:absolute;left:44px">80 混凝土、砂浆及其它配合比材料</span></div>
</div>
</div>
<div class="card" style="left:483px;top:105px;width:1410px;height:804px;overflow:hidden">
<div class="abs" style="left:0;top:0;width:1393px;height:35px;border-bottom:1px solid #ececec"></div>
<div class="abs" style="left:11px;top:10px"><svg width="14" height="14" viewBox="0 0 14 14" ><circle cx="7" cy="7" r="4.8" fill="none" stroke="#4a9bea" stroke-width="2.8"/><g stroke="#fff" stroke-width="2.2"><path d="M1.8 1.8 L4.8 4.8 M12.2 1.8 L9.2 4.8 M1.8 12.2 L4.8 9.2 M12.2 12.2 L9.2 9.2"/></g><circle cx="7" cy="7" r="6.4" fill="none" stroke="#3a92e8" stroke-width="1.1"/><circle cx="7" cy="7" r="3" fill="none" stroke="#3a92e8" stroke-width="1.1"/></svg></div>
<div class="abs" style="left:30px;top:0;line-height:33px;font-size:14px;color:#555;white-space:nowrap"><b style="color:#3a8ee6">信息价查询</b> <b>一共</b> <span style="color:#3a8ee6">30910609</span> <b>条材料，当前查询</b> <span style="color:#3a8ee6">1814</span> <b>条材料</b></div>
<div class="abs" style="left:1370px;top:16px;width:0;height:0;border-left:4.5px solid transparent;border-right:4.5px solid transparent;border-bottom:5px solid #333"></div>
<div class="abs" style="left:11px;top:44px;width:1374px;height:259px;border:1px solid #d9d9d9;border-top:none">
<div class="frow" style="top:0px;height:64px">
<div class="fl" style="top:1px;height:63px;line-height:63px">省份:</div>
<div class="fi" style="top:0px"><span>北京</span><span>天津</span><span>河北省</span><span>山西省</span><span>内蒙古</span><span>辽宁省</span><span>吉林省</span><span>黑龙江</span><span>上海</span><span>江苏省</span><span>浙江省</span><span>安徽省</span><span>福建省</span><span>江西省</span><span>山东省</span><span>河南省</span></div>
<div class="fi" style="top:31px"><span>湖北省</span><span>湖南省</span><span>广东省</span><span>广西</span><span>海南省</span><span>重庆</span><span class="s">四川省</span><span>贵州省</span><span>西藏</span><span>陕西省</span><span>甘肃省</span><span>青海省</span><span>宁夏</span><span>新疆</span></div>
</div>
<div class="frow" style="top:64px;height:64px">
<div class="fl" style="top:1px;height:63px;line-height:63px">地市:</div>
<div class="fi" style="top:0px"><span class="s">成都市</span><span>自贡市</span><span>攀枝花市</span><span>泸州市</span><span>德阳市</span><span>绵阳市</span><span>广元市</span><span>遂宁市</span><span>内江市</span><span>乐山市</span><span>南充市</span><span>眉山市</span><span>宜宾市</span><span>广安市</span><span>达州市</span><span>雅安市</span></div>
<div class="fi" style="top:31px"><span>巴中市</span><span>资阳市</span><span>阿坝藏族羌族自治州</span><span>甘孜藏族自治州</span><span>凉山彝族自治州</span></div>
</div>
<div class="frow" style="top:128px;height:64px">
<div class="fl" style="top:1px;height:63px;line-height:63px">区县:</div>
<div class="fi" style="top:0px"><span class="s">市区</span><span>龙泉驿区</span><span>青白江区</span><span>新都区</span><span>温江区</span><span>金堂县</span><span>双流区</span><span>郫都区</span><span>大邑县</span><span>蒲江县</span><span>新津区</span><span>简阳市</span><span>高新东区</span><span>天府机场片区</span><span>东部新区</span><span>都江堰市</span></div>
<div class="fi" style="top:31px"><span>彭州市</span><span>邛崃市</span><span>崇州市</span><span>天府新区</span></div>
</div>
<div class="frow" style="top:192px;height:33px">
<div class="fl" style="top:1px;height:32px;line-height:32px">年份:</div>
<div class="fi" style="top:0px"><span class="s">2022</span><span>2021</span><span>2020</span><span>2019</span><span>2018</span><span>2017</span><span>2016</span></div>
</div>
<div class="frow" style="top:225px;height:33px">
<div class="fl" style="top:1px;height:32px;line-height:32px">月份:</div>
<div class="fi" style="top:0px"><span class="s">09</span><span>08</span><span>07</span><span>06</span><span>05</span><span>04</span><span>03</span><span>02</span><span>01</span></div>
</div>
</div>
<div class="lab" style="left:15px;top:313px">材料名称:</div>
<div class="inp" style="left:93px;top:313px;width:384px">当前结果查询材料名称</div>
<div class="lab" style="left:482px;top:313px">规格型号:</div>
<div class="inp" style="left:560px;top:313px;width:384px">当前结果查询规格型号</div>
<div class="btn" style="left:1146px;top:313px;width:116px"><span style="position:absolute;left:20px;top:9px;line-height:0"><svg width="14" height="14" viewBox="0 0 14 14" ><circle cx="5.7" cy="5.7" r="4.2" fill="none" stroke="#fff" stroke-width="2.5"/><path stroke="#fff" stroke-width="2.8" stroke-linecap="round" d="M9.4 9.4 L12.4 12.4"/></svg></span><span style="position:absolute;left:43px">开始搜索</span></div>
<div class="btn" style="left:1265px;top:313px;width:116px"><span style="position:absolute;left:19px;top:10px;line-height:0"><svg width="17" height="12" viewBox="0 0 17 12" ><path fill="#fff" d="M6.4 0.4 H16.8 L10.6 11.6 H0.2z"/><path fill="#3598ea" d="M3.9 7.6 H10.2 L9.0 9.8 H2.7z"/></svg></span><span style="position:absolute;left:43px">清空筛选</span></div>
<div class="abs" style="left:0;top:350px;width:1393px;height:1px;background:#ececec"></div>
<div class="abs" style="left:1px;top:361px;width:1393px;height:34px;background:#f8f8f8;border-top:1px solid #ececec;border-bottom:1px solid #e6e6e6">
<div class="th" style="left:0px;width:50px">序号</div>
<div class="th" style="left:50px;width:200px">材料名称</div>
<div class="th" style="left:250px;width:200px">规格型号</div>
<div class="th" style="left:450px;width:70px">单位</div>
<div class="th" style="left:520px;width:100px">含税单价</div>
<div class="th" style="left:620px;width:100px">除税单价</div>
<div class="th" style="left:720px;width:200px">地区</div>
<div class="th" style="left:920px;width:100px">价格年月</div>
<div class="th" style="left:1020px;width:120px">价格期次</div>
<div class="th" style="left:1140px;width:161px;overflow:visible"><span style="position:absolute;left:0;width:200px;text-align:center">备注</span></div>
<div class="th" style="left:1301px;width:75px;border-right:none">价格趋势</div>
</div>
<div class="abs" style="left:2px;top:395px;width:1375px;height:409px;overflow:hidden">
<div class="row" style="top:0px">
<div class="c" style="left:0px;width:49px;text-align:center;">1</div>
<div class="c" style="left:49px;width:200px;text-align:left;padding-left:10px;">无缝管</div>
<div class="c" style="left:249px;width:200px;text-align:left;padding-left:10px;">综合</div>
<div class="c" style="left:449px;width:70px;text-align:center;">t</div>
<div class="c" style="left:519px;width:100px;text-align:right;padding-right:10px;">-</div>
<div class="c" style="left:619px;width:100px;text-align:right;padding-right:10px;">6600</div>
<div class="c" style="left:719px;width:200px;text-align:left;padding-left:10px;">四川省-成都市-市区</div>
<div class="c" style="left:919px;width:100px;text-align:center;">2022-09</div>
<div class="c" style="left:1019px;width:120px;text-align:center;">2022年10期</div>
<div class="c" style="left:1139px;width:161px;text-align:left;padding-left:10px;"></div>
<div class="c" style="left:1300px;width:75px;border-right:none"><span style="position:absolute;left:24px;top:8px;line-height:0"><svg width="19" height="15" viewBox="0 0 19 15" ><path fill="#4a8fd0" d="M0 0h1.4v13.2H19v1.4H0z"/><path fill="#3f8ad0" d="M3.2 8.2h2.6v4.2H3.2zM7 3.6h2.6v8.8H7zM10.8 6h2.6v6.4h-2.6zM14.6 1.6h2.6v10.8h-2.6z"/></svg></span></div>
</div>
<div class="row" style="top:32px">
<div class="c" style="left:0px;width:49px;text-align:center;">2</div>
<div class="c" style="left:49px;width:200px;text-align:left;padding-left:10px;">热镀锌钢管</div>
<div class="c" style="left:249px;width:200px;text-align:left;padding-left:10px;">DN15</div>
<div class="c" style="left:449px;width:70px;text-align:center;">t</div>
<div class="c" style="left:519px;width:100px;text-align:right;padding-right:10px;">-</div>
<div class="c" style="left:619px;width:100px;text-align:right;padding-right:10px;">6650</div>
<div class="c" style="left:719px;width:200px;text-align:left;padding-left:10px;">四川省-成都市-市区</div>
<div class="c" style="left:919px;width:100px;text-align:center;">2022-09</div>
<div class="c" style="left:1019px;width:120px;text-align:center;">2022年10期</div>
<div class="c" style="left:1139px;width:161px;text-align:left;padding-left:10px;"></div>
<div class="c" style="left:1300px;width:75px;border-right:none"><span style="position:absolute;left:24px;top:8px;line-height:0"><svg width="19" height="15" viewBox="0 0 19 15" ><path fill="#4a8fd0" d="M0 0h1.4v13.2H19v1.4H0z"/><path fill="#3f8ad0" d="M3.2 8.2h2.6v4.2H3.2zM7 3.6h2.6v8.8H7zM10.8 6h2.6v6.4h-2.6zM14.6 1.6h2.6v10.8h-2.6z"/></svg></span></div>
</div>
<div class="row" style="top:64px">
<div class="c" style="left:0px;width:49px;text-align:center;">3</div>
<div class="c" style="left:49px;width:200px;text-align:left;padding-left:10px;">热镀锌钢管</div>
<div class="c" style="left:249px;width:200px;text-align:left;padding-left:10px;">DN20</div>
<div class="c" style="left:449px;width:70px;text-align:center;">t</div>
<div class="c" style="left:519px;width:100px;text-align:right;padding-right:10px;">-</div>
<div class="c" style="left:619px;width:100px;text-align:right;padding-right:10px;">6650</div>
<div class="c" style="left:719px;width:200px;text-align:left;padding-left:10px;">四川省-成都市-市区</div>
<div class="c" style="left:919px;width:100px;text-align:center;">2022-09</div>
<div class="c" style="left:1019px;width:120px;text-align:center;">2022年10期</div>
<div class="c" style="left:1139px;width:161px;text-align:left;padding-left:10px;"></div>
<div class="c" style="left:1300px;width:75px;border-right:none"><span style="position:absolute;left:24px;top:8px;line-height:0"><svg width="19" height="15" viewBox="0 0 19 15" ><path fill="#4a8fd0" d="M0 0h1.4v13.2H19v1.4H0z"/><path fill="#3f8ad0" d="M3.2 8.2h2.6v4.2H3.2zM7 3.6h2.6v8.8H7zM10.8 6h2.6v6.4h-2.6zM14.6 1.6h2.6v10.8h-2.6z"/></svg></span></div>
</div>
<div class="row" style="top:96px">
<div class="c" style="left:0px;width:49px;text-align:center;">4</div>
<div class="c" style="left:49px;width:200px;text-align:left;padding-left:10px;">热镀锌钢管</div>
<div class="c" style="left:249px;width:200px;text-align:left;padding-left:10px;">DN25</div>
<div class="c" style="left:449px;width:70px;text-align:center;">t</div>
<div class="c" style="left:519px;width:100px;text-align:right;padding-right:10px;">-</div>
<div class="c" style="left:619px;width:100px;text-align:right;padding-right:10px;">6650</div>
<div class="c" style="left:719px;width:200px;text-align:left;padding-left:10px;">四川省-成都市-市区</div>
<div class="c" style="left:919px;width:100px;text-align:center;">2022-09</div>
<div class="c" style="left:1019px;width:120px;text-align:center;">2022年10期</div>
<div class="c" style="left:1139px;width:161px;text-align:left;padding-left:10px;"></div>
<div class="c" style="left:1300px;width:75px;border-right:none"><span style="position:absolute;left:24px;top:8px;line-height:0"><svg width="19" height="15" viewBox="0 0 19 15" ><path fill="#4a8fd0" d="M0 0h1.4v13.2H19v1.4H0z"/><path fill="#3f8ad0" d="M3.2 8.2h2.6v4.2H3.2zM7 3.6h2.6v8.8H7zM10.8 6h2.6v6.4h-2.6zM14.6 1.6h2.6v10.8h-2.6z"/></svg></span></div>
</div>
<div class="row" style="top:128px">
<div class="c" style="left:0px;width:49px;text-align:center;">5</div>
<div class="c" style="left:49px;width:200px;text-align:left;padding-left:10px;">热镀锌钢管</div>
<div class="c" style="left:249px;width:200px;text-align:left;padding-left:10px;">DN32</div>
<div class="c" style="left:449px;width:70px;text-align:center;">t</div>
<div class="c" style="left:519px;width:100px;text-align:right;padding-right:10px;">-</div>
<div class="c" style="left:619px;width:100px;text-align:right;padding-right:10px;">6630</div>
<div class="c" style="left:719px;width:200px;text-align:left;padding-left:10px;">四川省-成都市-市区</div>
<div class="c" style="left:919px;width:100px;text-align:center;">2022-09</div>
<div class="c" style="left:1019px;width:120px;text-align:center;">2022年10期</div>
<div class="c" style="left:1139px;width:161px;text-align:left;padding-left:10px;"></div>
<div class="c" style="left:1300px;width:75px;border-right:none"><span style="position:absolute;left:24px;top:8px;line-height:0"><svg width="19" height="15" viewBox="0 0 19 15" ><path fill="#4a8fd0" d="M0 0h1.4v13.2H19v1.4H0z"/><path fill="#3f8ad0" d="M3.2 8.2h2.6v4.2H3.2zM7 3.6h2.6v8.8H7zM10.8 6h2.6v6.4h-2.6zM14.6 1.6h2.6v10.8h-2.6z"/></svg></span></div>
</div>
<div class="row" style="top:160px">
<div class="c" style="left:0px;width:49px;text-align:center;">6</div>
<div class="c" style="left:49px;width:200px;text-align:left;padding-left:10px;">热镀锌钢管</div>
<div class="c" style="left:249px;width:200px;text-align:left;padding-left:10px;">DN40</div>
<div class="c" style="left:449px;width:70px;text-align:center;">t</div>
<div class="c" style="left:519px;width:100px;text-align:right;padding-right:10px;">-</div>
<div class="c" style="left:619px;width:100px;text-align:right;padding-right:10px;">6610</div>
<div class="c" style="left:719px;width:200px;text-align:left;padding-left:10px;">四川省-成都市-市区</div>
<div class="c" style="left:919px;width:100px;text-align:center;">2022-09</div>
<div class="c" style="left:1019px;width:120px;text-align:center;">2022年10期</div>
<div class="c" style="left:1139px;width:161px;text-align:left;padding-left:10px;"></div>
<div class="c" style="left:1300px;width:75px;border-right:none"><span style="position:absolute;left:24px;top:8px;line-height:0"><svg width="19" height="15" viewBox="0 0 19 15" ><path fill="#4a8fd0" d="M0 0h1.4v13.2H19v1.4H0z"/><path fill="#3f8ad0" d="M3.2 8.2h2.6v4.2H3.2zM7 3.6h2.6v8.8H7zM10.8 6h2.6v6.4h-2.6zM14.6 1.6h2.6v10.8h-2.6z"/></svg></span></div>
</div>
<div class="row" style="top:192px">
<div class="c" style="left:0px;width:49px;text-align:center;">7</div>
<div class="c" style="left:49px;width:200px;text-align:left;padding-left:10px;">热镀锌钢管</div>
<div class="c" style="left:249px;width:200px;text-align:left;padding-left:10px;">DN50</div>
<div class="c" style="left:449px;width:70px;text-align:center;">t</div>
<div class="c" style="left:519px;width:100px;text-align:right;padding-right:10px;">-</div>
<div class="c" style="left:619px;width:100px;text-align:right;padding-right:10px;">6610</div>
<div class="c" style="left:719px;width:200px;text-align:left;padding-left:10px;">四川省-成都市-市区</div>
<div class="c" style="left:919px;width:100px;text-align:center;">2022-09</div>
<div class="c" style="left:1019px;width:120px;text-align:center;">2022年10期</div>
<div class="c" style="left:1139px;width:161px;text-align:left;padding-left:10px;"></div>
<div class="c" style="left:1300px;width:75px;border-right:none"><span style="position:absolute;left:24px;top:8px;line-height:0"><svg width="19" height="15" viewBox="0 0 19 15" ><path fill="#4a8fd0" d="M0 0h1.4v13.2H19v1.4H0z"/><path fill="#3f8ad0" d="M3.2 8.2h2.6v4.2H3.2zM7 3.6h2.6v8.8H7zM10.8 6h2.6v6.4h-2.6zM14.6 1.6h2.6v10.8h-2.6z"/></svg></span></div>
</div>
<div class="row" style="top:224px">
<div class="c" style="left:0px;width:49px;text-align:center;">8</div>
<div class="c" style="left:49px;width:200px;text-align:left;padding-left:10px;">热镀锌钢管</div>
<div class="c" style="left:249px;width:200px;text-align:left;padding-left:10px;">DN65</div>
<div class="c" style="left:449px;width:70px;text-align:center;">t</div>
<div class="c" style="left:519px;width:100px;text-align:right;padding-right:10px;">-</div>
<div class="c" style="left:619px;width:100px;text-align:right;padding-right:10px;">6530</div>
<div class="c" style="left:719px;width:200px;text-align:left;padding-left:10px;">四川省-成都市-市区</div>
<div class="c" style="left:919px;width:100px;text-align:center;">2022-09</div>
<div class="c" style="left:1019px;width:120px;text-align:center;">2022年10期</div>
<div class="c" style="left:1139px;width:161px;text-align:left;padding-left:10px;"></div>
<div class="c" style="left:1300px;width:75px;border-right:none"><span style="position:absolute;left:24px;top:8px;line-height:0"><svg width="19" height="15" viewBox="0 0 19 15" ><path fill="#4a8fd0" d="M0 0h1.4v13.2H19v1.4H0z"/><path fill="#3f8ad0" d="M3.2 8.2h2.6v4.2H3.2zM7 3.6h2.6v8.8H7zM10.8 6h2.6v6.4h-2.6zM14.6 1.6h2.6v10.8h-2.6z"/></svg></span></div>
</div>
<div class="row" style="top:256px">
<div class="c" style="left:0px;width:49px;text-align:center;">9</div>
<div class="c" style="left:49px;width:200px;text-align:left;padding-left:10px;">热镀锌钢管</div>
<div class="c" style="left:249px;width:200px;text-align:left;padding-left:10px;">DN80</div>
<div class="c" style="left:449px;width:70px;text-align:center;">t</div>
<div class="c" style="left:519px;width:100px;text-align:right;padding-right:10px;">-</div>
<div class="c" style="left:619px;width:100px;text-align:right;padding-right:10px;">6560</div>
<div class="c" style="left:719px;width:200px;text-align:left;padding-left:10px;">四川省-成都市-市区</div>
<div class="c" style="left:919px;width:100px;text-align:center;">2022-09</div>
<div class="c" style="left:1019px;width:120px;text-align:center;">2022年10期</div>
<div class="c" style="left:1139px;width:161px;text-align:left;padding-left:10px;"></div>
<div class="c" style="left:1300px;width:75px;border-right:none"><span style="position:absolute;left:24px;top:8px;line-height:0"><svg width="19" height="15" viewBox="0 0 19 15" ><path fill="#4a8fd0" d="M0 0h1.4v13.2H19v1.4H0z"/><path fill="#3f8ad0" d="M3.2 8.2h2.6v4.2H3.2zM7 3.6h2.6v8.8H7zM10.8 6h2.6v6.4h-2.6zM14.6 1.6h2.6v10.8h-2.6z"/></svg></span></div>
</div>
<div class="row h" style="top:288px">
<div class="c" style="left:0px;width:49px;text-align:center;">10</div>
<div class="c" style="left:49px;width:200px;text-align:left;padding-left:10px;">热镀锌钢管</div>
<div class="c" style="left:249px;width:200px;text-align:left;padding-left:10px;">DN100</div>
<div class="c" style="left:449px;width:70px;text-align:center;">t</div>
<div class="c" style="left:519px;width:100px;text-align:right;padding-right:10px;">-</div>
<div class="c" style="left:619px;width:100px;text-align:right;padding-right:10px;">6580</div>
<div class="c" style="left:719px;width:200px;text-align:left;padding-left:10px;">四川省-成都市-市区</div>
<div class="c" style="left:919px;width:100px;text-align:center;">2022-09</div>
<div class="c" style="left:1019px;width:120px;text-align:center;">2022年10期</div>
<div class="c" style="left:1139px;width:161px;text-align:left;padding-left:10px;"></div>
<div class="c" style="left:1300px;width:75px;border-right:none"><span style="position:absolute;left:24px;top:8px;line-height:0"><svg width="19" height="15" viewBox="0 0 19 15" ><path fill="#4a8fd0" d="M0 0h1.4v13.2H19v1.4H0z"/><path fill="#3f8ad0" d="M3.2 8.2h2.6v4.2H3.2zM7 3.6h2.6v8.8H7zM10.8 6h2.6v6.4h-2.6zM14.6 1.6h2.6v10.8h-2.6z"/></svg></span></div>
</div>
<div class="row" style="top:320px">
<div class="c" style="left:0px;width:49px;text-align:center;">11</div>
<div class="c" style="left:49px;width:200px;text-align:left;padding-left:10px;">热镀锌钢管</div>
<div class="c" style="left:249px;width:200px;text-align:left;padding-left:10px;">DN125</div>
<div class="c" style="left:449px;width:70px;text-align:center;">t</div>
<div class="c" style="left:519px;width:100px;text-align:right;padding-right:10px;">-</div>
<div class="c" style="left:619px;width:100px;text-align:right;padding-right:10px;">6590</div>
<div class="c" style="left:719px;width:200px;text-align:left;padding-left:10px;">四川省-成都市-市区</div>
<div class="c" style="left:919px;width:100px;text-align:center;">2022-09</div>
<div class="c" style="left:1019px;width:120px;text-align:center;">2022年10期</div>
<div class="c" style="left:1139px;width:161px;text-align:left;padding-left:10px;"></div>
<div class="c" style="left:1300px;width:75px;border-right:none"><span style="position:absolute;left:24px;top:8px;line-height:0"><svg width="19" height="15" viewBox="0 0 19 15" ><path fill="#4a8fd0" d="M0 0h1.4v13.2H19v1.4H0z"/><path fill="#3f8ad0" d="M3.2 8.2h2.6v4.2H3.2zM7 3.6h2.6v8.8H7zM10.8 6h2.6v6.4h-2.6zM14.6 1.6h2.6v10.8h-2.6z"/></svg></span></div>
</div>
<div class="row" style="top:352px">
<div class="c" style="left:0px;width:49px;text-align:center;">12</div>
<div class="c" style="left:49px;width:200px;text-align:left;padding-left:10px;">热镀锌钢管</div>
<div class="c" style="left:249px;width:200px;text-align:left;padding-left:10px;">DN150</div>
<div class="c" style="left:449px;width:70px;text-align:center;">t</div>
<div class="c" style="left:519px;width:100px;text-align:right;padding-right:10px;">-</div>
<div class="c" style="left:619px;width:100px;text-align:right;padding-right:10px;">6660</div>
<div class="c" style="left:719px;width:200px;text-align:left;padding-left:10px;">四川省-成都市-市区</div>
<div class="c" style="left:919px;width:100px;text-align:center;">2022-09</div>
<div class="c" style="left:1019px;width:120px;text-align:center;">2022年10期</div>
<div class="c" style="left:1139px;width:161px;text-align:left;padding-left:10px;"></div>
<div class="c" style="left:1300px;width:75px;border-right:none"><span style="position:absolute;left:24px;top:8px;line-height:0"><svg width="19" height="15" viewBox="0 0 19 15" ><path fill="#4a8fd0" d="M0 0h1.4v13.2H19v1.4H0z"/><path fill="#3f8ad0" d="M3.2 8.2h2.6v4.2H3.2zM7 3.6h2.6v8.8H7zM10.8 6h2.6v6.4h-2.6zM14.6 1.6h2.6v10.8h-2.6z"/></svg></span></div>
</div>
<div class="row" style="top:384px">
<div class="c" style="left:0px;width:49px;text-align:center;">13</div>
<div class="c" style="left:49px;width:200px;text-align:left;padding-left:10px;">冷镀锌钢管</div>
<div class="c" style="left:249px;width:200px;text-align:left;padding-left:10px;">DN15-DN20-DN25</div>
<div class="c" style="left:449px;width:70px;text-align:center;">t</div>
<div class="c" style="left:519px;width:100px;text-align:right;padding-right:10px;">-</div>
<div class="c" style="left:619px;width:100px;text-align:right;padding-right:10px;">5520</div>
<div class="c" style="left:719px;width:200px;text-align:left;padding-left:10px;">四川省-成都市-市区</div>
<div class="c" style="left:919px;width:100px;text-align:center;">2022-09</div>
<div class="c" style="left:1019px;width:120px;text-align:center;">2022年10期</div>
<div class="c" style="left:1139px;width:161px;text-align:left;padding-left:10px;"></div>
<div class="c" style="left:1300px;width:75px;border-right:none"><span style="position:absolute;left:24px;top:8px;line-height:0"><svg width="19" height="15" viewBox="0 0 19 15" ><path fill="#4a8fd0" d="M0 0h1.4v13.2H19v1.4H0z"/><path fill="#3f8ad0" d="M3.2 8.2h2.6v4.2H3.2zM7 3.6h2.6v8.8H7zM10.8 6h2.6v6.4h-2.6zM14.6 1.6h2.6v10.8h-2.6z"/></svg></span></div>
</div>
</div>
<div class="abs" style="left:1377px;top:395px;width:17px;height:409px;background:#f1f1f1"></div>
<div class="abs" style="left:1381px;top:402px;width:0;height:0;border-left:4px solid transparent;border-right:4px solid transparent;border-bottom:4px solid #a3a3a3"></div>
<div class="abs" style="left:1394px;top:0;width:16px;height:804px;background:#f1f1f1"></div>
<div class="abs" style="left:1395px;top:17px;width:13px;height:569px;background:#c1c1c1"></div>
<div class="abs" style="left:1397px;top:7px;width:0;height:0;border-left:4px solid transparent;border-right:4px solid transparent;border-bottom:4px solid #a3a3a3"></div>
<div class="abs" style="left:1397px;top:792px;width:0;height:0;border-left:4px solid transparent;border-right:4px solid transparent;border-top:4px solid #505050"></div>
</div>
<div class="abs" style="left:472px;top:105px;width:12px;height:804px;background:#fff;border-left:1px solid #ededed;border-right:1px solid #e9e9e9"></div>
<div class="abs" style="left:476px;top:636px;width:4px;height:24px;border-left:1px dotted #b4c0d0;border-right:1px dotted #b4c0d0"></div>
<div class="abs" style="left:0;top:0;width:1914px;height:1px;background:rgba(255,255,255,.8)"></div>
<div class="abs" style="left:0;top:0;width:1px;height:929px;background:rgba(255,255,255,.4)"></div>
</body></html>
